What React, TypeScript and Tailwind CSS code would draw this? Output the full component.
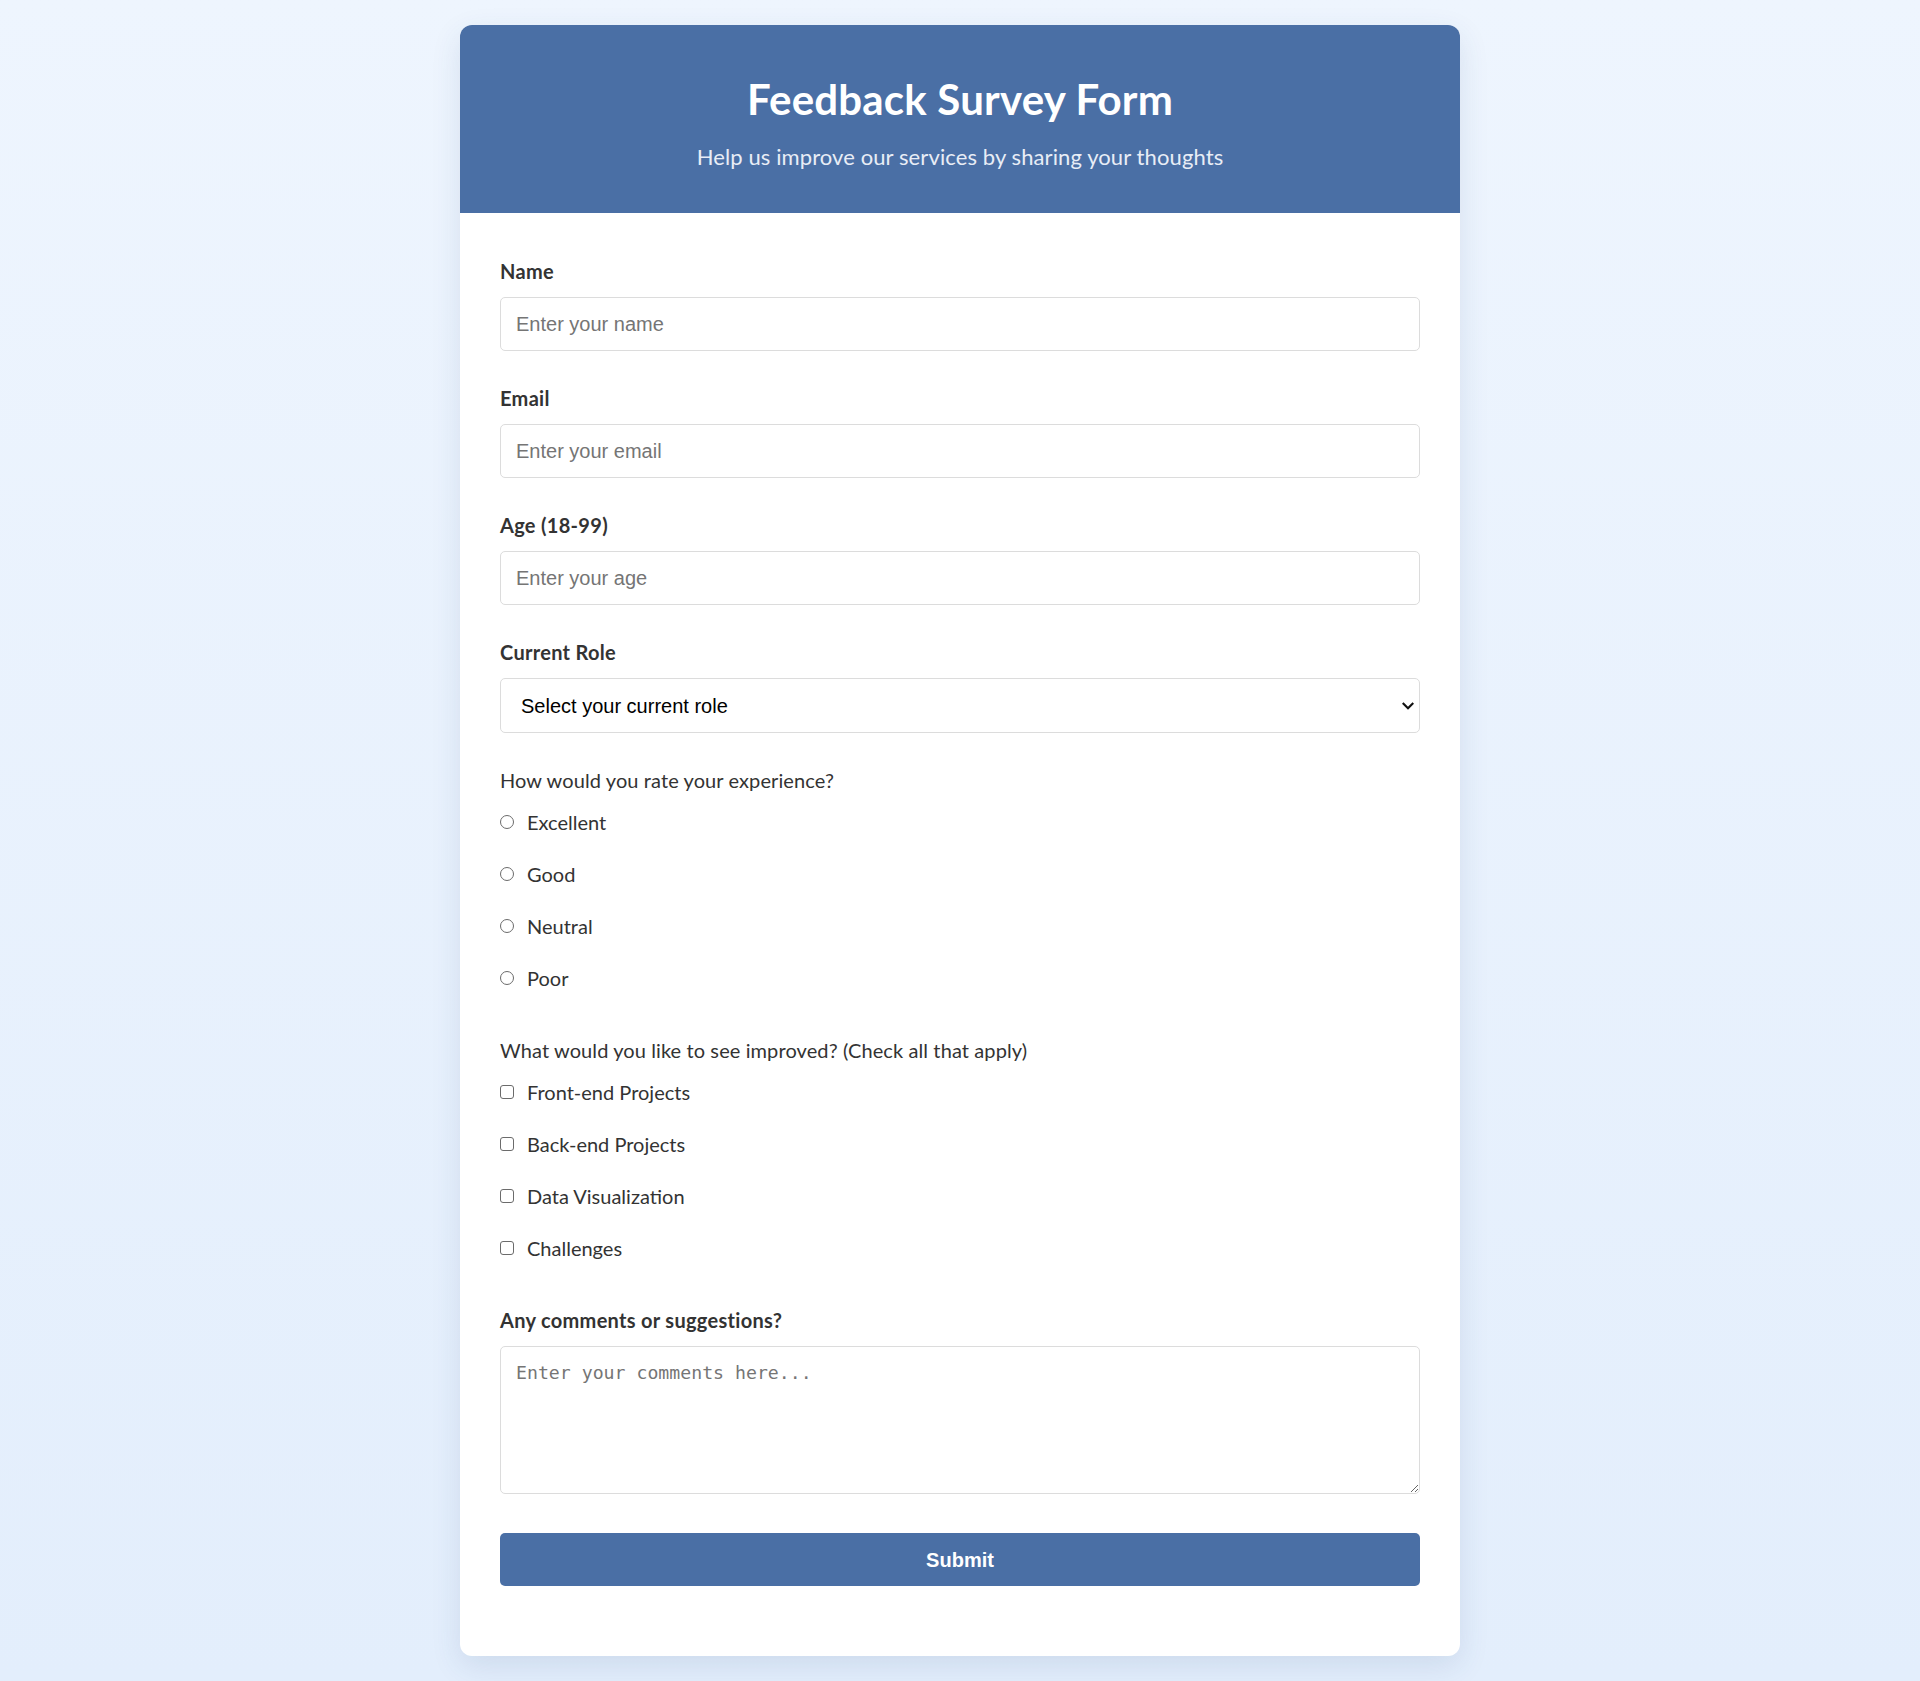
import React from "react";

const ratings = ["Excellent", "Good", "Neutral", "Poor"];
const improvements = ["Front-end Projects", "Back-end Projects", "Data Visualization", "Challenges"];

function Label({ children, htmlFor }: { children: React.ReactNode; htmlFor?: string }) {
  return (
    <label htmlFor={htmlFor} className="mb-[11px] block text-[20px] leading-[30px] font-bold tracking-[0.3px] text-[#333333]">
      {children}
    </label>
  );
}

function TextInput({ id, placeholder, type = "text" }: { id: string; placeholder: string; type?: string }) {
  return (
    <input
      id={id}
      type={type}
      placeholder={placeholder}
      className="block h-[54px] w-full rounded-[5px] border border-[#dcdcdc] bg-white px-[15px] font-['Liberation_Sans',Arial,sans-serif] text-[20px] text-[#222] outline-none placeholder:text-[#757575]"
    />
  );
}

export default function App() {
  return (
    <div className="min-h-screen bg-gradient-to-b from-[#eef5fe] to-[#e3eefc] py-[25px] font-['Lato','Noto_Sans',sans-serif]">
      <div className="mx-auto w-[1000px] overflow-hidden rounded-[12px] bg-white shadow-[0_10px_30px_rgba(40,70,120,0.12)]">
        <div className="bg-[#4a6fa5] pt-[50px] pb-[40px] text-center text-white">
          <h1 className="text-[42px] leading-[48px] font-bold tracking-[0.2px]">Feedback Survey Form</h1>
          <p className="mt-[17px] text-[22px] leading-[33px] tracking-[0.1px] text-[#e8edf6]">
            Help us improve our services by sharing your thoughts
          </p>
        </div>

        <form className="px-[40px] pt-[43px] pb-[70px]" onSubmit={(e) => e.preventDefault()}>
          <div className="mb-[32px]">
            <Label htmlFor="name">Name</Label>
            <TextInput id="name" placeholder="Enter your name" />
          </div>
          <div className="mb-[32px]">
            <Label htmlFor="email">Email</Label>
            <TextInput id="email" type="email" placeholder="Enter your email" />
          </div>
          <div className="mb-[32px]">
            <Label htmlFor="age">Age (18-99)</Label>
            <TextInput id="age" placeholder="Enter your age" />
          </div>
          <div className="mb-[32px]">
            <Label htmlFor="role">Current Role</Label>
            <div className="relative">
              <select
                id="role"
                defaultValue=""
                className="block h-[55px] w-full appearance-none rounded-[5px] border border-[#dcdcdc] bg-white pl-[20px] pr-[40px] font-['Liberation_Sans',Arial,sans-serif] text-[20px] text-black outline-none"
              >
                <option value="">Select your current role</option>
                <option value="student">Student</option>
                <option value="full-time">Full Time Job</option>
                <option value="learner">Full Time Learner</option>
                <option value="other">Other</option>
              </select>
              <svg
                className="pointer-events-none absolute right-[6px] top-1/2 h-[12px] w-[12px] -translate-y-1/2"
                viewBox="0 0 12 12"
                fill="none"
              >
                <path d="M1.5 3.8 L6 8.2 L10.5 3.8" stroke="#111" strokeWidth="2.2" strokeLinecap="square" />
              </svg>
            </div>
          </div>

          <div className="mb-[42px]">
            <p className="mb-[12px] text-[20px] leading-[30px] tracking-[0.1px] text-[#333333]">How would you rate your experience?</p>
            <div className="flex flex-col gap-[22px]">
              {ratings.map((r) => (
                <label key={r} className="flex h-[30px] items-center gap-[13px] text-[20px] leading-[30px] text-[#333333]">
                  <input
                    type="radio"
                    name="rating"
                    value={r}
                    className="m-0 h-[14px] w-[14px] shrink-0 appearance-none rounded-full border border-[#6b6b6b] bg-white"
                  />
                  {r}
                </label>
              ))}
            </div>
          </div>

          <div className="mb-[42px]">
            <p className="mb-[12px] text-[20px] leading-[30px] tracking-[0.1px] text-[#333333]">
              What would you like to see improved? (Check all that apply)
            </p>
            <div className="flex flex-col gap-[22px]">
              {improvements.map((r) => (
                <label key={r} className="flex h-[30px] items-center gap-[13px] text-[20px] leading-[30px] text-[#333333]">
                  <input
                    type="checkbox"
                    value={r}
                    className="m-0 h-[14px] w-[14px] shrink-0 appearance-none rounded-[3px] border border-[#6b6b6b] bg-white"
                  />
                  {r}
                </label>
              ))}
            </div>
          </div>

          <div className="mb-[39px]">
            <Label htmlFor="comments">Any comments or suggestions?</Label>
            <textarea
              id="comments"
              placeholder="Enter your comments here..."
              className="block h-[148px] w-full rounded-[5px] border border-[#dcdcdc] bg-white px-[15px] py-[12px] font-['DejaVu_Sans_Mono',monospace] text-[18.2px] leading-[27px] text-[#222] outline-none placeholder:text-[#757575]"
            />
          </div>

          <button
            type="submit"
            className="block h-[53px] w-full rounded-[5px] bg-[#4a6fa5] font-['Liberation_Sans',Arial,sans-serif] text-[20px] font-bold text-white"
          >
            Submit
          </button>
        </form>
      </div>
    </div>
  );
}
